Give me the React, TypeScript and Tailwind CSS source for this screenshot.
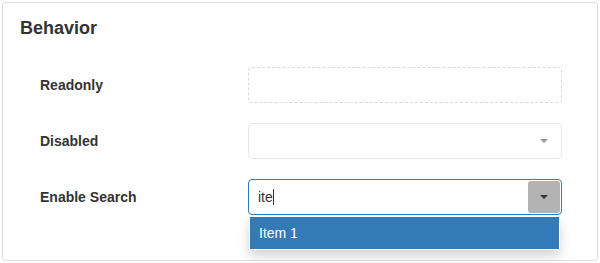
import { useState } from 'react'

interface FieldRowProps {
  label: string
  children: React.ReactNode
}

function FieldRow({ label, children }: FieldRowProps) {
  return (
    <div className="flex h-[36px] items-center">
      <label className="w-[228px] pl-[20px] text-[14px] font-bold leading-[20px]">{label}</label>
      <div className="relative h-[36px] w-[314px]">{children}</div>
    </div>
  )
}

function Caret({ color }: { color: string }) {
  return <span className={`h-0 w-0 border-x-[4px] border-t-[4px] border-x-transparent ${color}`} />
}

export default function App() {
  const [query] = useState('ite')

  return (
    <div className="bg-white p-[2px] font-['Liberation_Sans',Arial,sans-serif] text-[#333]">
      <div className="h-[259px] rounded-[4px] border border-[#ddd] bg-white px-[17px] pt-[15px]">
        <h3 className="text-[18px] font-bold leading-[20px]">Behavior</h3>

        <div className="mt-[29px] flex flex-col gap-[20px]">
          <FieldRow label="Readonly">
            <div className="h-full w-full rounded-[4px] border border-dashed border-[#d9d9d9] bg-white" />
          </FieldRow>

          <FieldRow label="Disabled">
            <div className="flex h-full w-full items-center justify-end rounded-[4px] border border-[#e8e8e8] bg-white pr-[13px]">
              <Caret color="border-t-[#999]" />
            </div>
          </FieldRow>

          <FieldRow label="Enable Search">
            <div className="flex h-full w-full items-center rounded-[4px] border border-[#337ab7] bg-white pl-[9px]">
              <span className="text-[14px] leading-[20px] text-[#333]">{query}</span>
              <span className="h-[16px] w-px bg-[#333]" />
              <button className="ml-auto mr-px flex h-[32px] w-[32px] items-center justify-center rounded-[3px] bg-[#b3b3b3]">
                <Caret color="border-t-[#333]" />
              </button>
            </div>
            <ul className="absolute left-px top-[37px] z-10 w-[311px] rounded-[3px] border border-white bg-white shadow-[0_6px_12px_rgba(0,0,0,0.175)]">
              <li className="flex h-[32px] items-center bg-[#337ab7] pl-[9px] text-[14px] leading-[20px] text-white">Item 1</li>
            </ul>
          </FieldRow>
        </div>
      </div>
    </div>
  )
}
